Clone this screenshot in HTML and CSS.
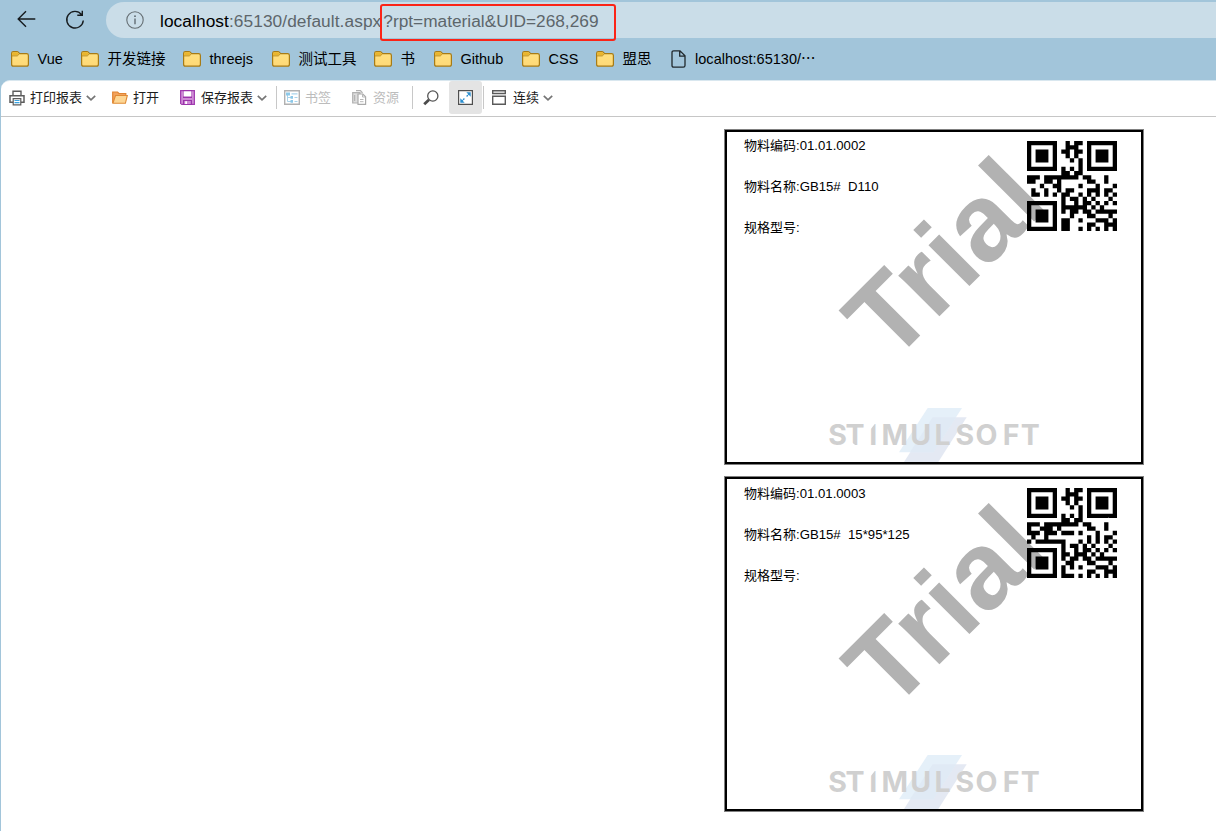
FILE: index.html
```html
<!DOCTYPE html>
<html lang="zh-CN">
<head>
<meta charset="utf-8">
<title>default.aspx</title>
<link rel="stylesheet" href="styles.css">
</head>
<body>
<svg class="defs" width="0" height="0">
  <defs>
    <linearGradient id="fold" x1="0" y1="0" x2="0" y2="1"><stop offset="0" stop-color="#ffe182"/><stop offset="1" stop-color="#ffd976"/></linearGradient>
    <symbol id="folder" viewBox="0 0 18 16">
      <path d="M.6 13.2V2.4Q.6.6 2.4.6H6q.8 0 1.300.6L8.600 2.600H15.600Q17.400 2.600 17.400 4.400V13.200Q17.400 15.200 15.600 15.200H2.400Q.6 15.200.6 13.200Z" fill="url(#fold)" stroke="#a77b16" stroke-width="1.200"/>
      <path d="M1.200 4.600V2.400Q1.200 1.200 2.400 1.200H6L8 2.900 6.500 4.600Z" fill="#eab52c"/>
      <path d="M1 4.900H6.300L8.300 3" fill="none" stroke="#b98a1c" stroke-width=".9"/>
    </symbol>
    <symbol id="chev" viewBox="0 0 10 6"><path d="M.8.8 5 4.800 9.200.8" fill="none" stroke="#757575" stroke-width="1.700"/></symbol>
    <symbol id="logo" viewBox="0 0 230 62">
      <path d="M112.700 17.300H146.700L118.300 62H84Z" fill="#e4e9f3"/>
      <path d="M107.700 8H142L113.300 52.300H79Z" fill="#e5f0f9"/>
      <path d="M112.700 17.300H136L113.300 52.300H90Z" fill="#e0eaf5"/>
      <text x="8.300 25.600 49.300 61.500 90.300 114.500 135.600 155.600 182.800 200.800" y="45.400" class="brand">STIMULSOFT</text>
      <path d="M50 24V30L54.800 24ZM32 46.500V42.500L37 46.500Z" fill="#fff"/>
    </symbol>
  </defs>
</svg>

<header class="chrome">
  <div class="nav">
    <svg class="back" width="20" height="18" viewBox="0 0 20 18"><path d="M18.300 9H1.500M9 1.200 1.200 9 9 16.800" fill="none" stroke="#161b1e" stroke-width="1.400"/></svg>
    <svg class="reload" width="20" height="20" viewBox="0 0 20 20"><path d="M16.500 4.500A8.300 8.300 0 1 0 18.300 10.500M17.300.8V5.300H12.300" fill="none" stroke="#161b1e" stroke-width="1.400"/></svg>
    <div class="address">
      <svg width="18" height="18" viewBox="0 0 18 18"><circle cx="9" cy="9" r="8.200" fill="none" stroke="#646d72" stroke-width="1.100"/><path d="M9 7.600V13.300" stroke="#59636a" stroke-width="1.300"/><circle cx="9" cy="5.200" r=".9" fill="#59636a"/></svg>
      <div class="url"><b>localhost</b>:65130/default.aspx<span class="query">?rpt=material&amp;UID=268,269</span></div>
    </div>
  </div>
  <nav class="bookmarks">
    <a><svg><use href="#folder"/></svg>Vue</a>
    <a><svg><use href="#folder"/></svg>开发链接</a>
    <a><svg><use href="#folder"/></svg>threejs</a>
    <a><svg><use href="#folder"/></svg>测试工具</a>
    <a><svg><use href="#folder"/></svg>书</a>
    <a><svg><use href="#folder"/></svg>Github</a>
    <a><svg><use href="#folder"/></svg>CSS</a>
    <a><svg><use href="#folder"/></svg>盟思</a>
    <a class="page"><svg viewBox="0 0 15 18"><path d="M1 2.500Q1 .8 2.700.8H9L14 5.800V15.500Q14 17.200 12.300 17.200H2.700Q1 17.200 1 15.500ZM8.700 1V6.200H14" fill="none" stroke="#20282c" stroke-width="1.300"/></svg><span>localhost:65130/⋯</span></a>
  </nav>
</header>

<main class="viewer">
  <div class="toolbar">
    <div class="tool print">
      <svg width="16" height="16" viewBox="0 0 16 16"><path d="M4 5.500V1.200H12V5.500" fill="#fff" stroke="#5d5d5d" stroke-width="1.400"/><path d="M1 5.700H15V12.300H1Z" fill="#fff" stroke="#5d5d5d" stroke-width="1.500"/><path d="M4.200 8.700H11.800V14.900H4.200Z" fill="#fff" stroke="#5d5d5d" stroke-width="1.200"/><path d="M5.500 10.500H10.500M5.500 12.700H10.500" stroke="#3ba3e0" stroke-width="1.200"/></svg>
      <span>打印报表</span><svg class="chev"><use href="#chev"/></svg>
    </div>
    <div class="tool open">
      <svg width="16" height="13" viewBox="0 0 16 13"><path d="M.7 12V1H5.500L7 2.500H13.800V5" fill="#f2a25d" stroke="#e08432" stroke-width="1.200"/><path d="M3.500 4.500H15.300L13.400 12.300H.9Z" fill="#fdd694" stroke="#e08a35" stroke-width="1.100"/></svg>
      <span>打开</span>
    </div>
    <div class="tool save">
      <svg width="15" height="15" viewBox="0 0 15 15"><path d="M0 0H15V15H1.500L0 13.500Z" fill="#a23fb0"/><path d="M1.200 1.200H3V8H12V1.200H13.800V13.800H1.200Z" fill="#cf8bd6"/><path d="M3.600 0H11.400V6.700H3.600Z" fill="#fff"/><path d="M3 0H12V1.200H3ZM3 6.700H12V8H3ZM3 10H12V15H3Z" fill="#9b35ab"/><path d="M4.200 11H10.800V14H4.200Z" fill="#cf8bd6"/><path d="M5.200 11.300H7V14H5.200Z" fill="#fff"/></svg>
      <span>保存报表</span><svg class="chev"><use href="#chev"/></svg>
    </div>
    <i class="sep"></i>
    <div class="tool marks off">
      <svg width="16" height="15" viewBox="0 0 16 15"><path d="M.7.7H15.300V14.300H.7Z" fill="#fff" stroke="#b1b1b1" stroke-width="1.400"/><path d="M3.500 4V11.500H7M3.500 7.500H7" fill="none" stroke="#a9d3ea" stroke-width="1"/><path d="M2 2.500H6V5.500H2ZM6.500 6H9V8.800H6.500ZM6.500 10H9V12.800H6.500Z" fill="#8cc8e8"/><path d="M7.500 3.800H13.500M10.500 7.500H13.500M10.500 11.500H13.500" stroke="#a9d3ea" stroke-width="1.200"/></svg>
      <span>书签</span>
    </div>
    <div class="tool res off">
      <svg width="15" height="15" viewBox="0 0 15 15"><path d="M.7 2.600H8V13H.7Z" fill="#ddd" stroke="#b1b1b1" stroke-width="1.200"/><path d="M4 .6H8.500L10.500 3" fill="none" stroke="#b1b1b1" stroke-width="1.200"/><path d="M6 4H10.800L13.600 6.800V14.300H6Z" fill="#fff" stroke="#aaa" stroke-width="1.200"/><path d="M10.500 4V7H13.500M8 9.500H11.500M8 11.700H11.500" fill="none" stroke="#b8b8b8" stroke-width="1"/><path d="M2.700 5V11" stroke="#aaa"/></svg>
      <span>资源</span>
    </div>
    <i class="sep"></i>
    <svg class="find" width="16" height="16" viewBox="0 0 16 16"><circle cx="9.800" cy="6" r="5.100" fill="#fff" stroke="#555" stroke-width="1.300"/><path d="M6 9.800 1.200 14.300" stroke="#4b4b4b" stroke-width="2.800"/></svg>
    <div class="full"><svg width="15" height="15" viewBox="0 0 15 15"><path d="M.6.6H14.400V14.400H.6Z" fill="#fff" stroke="#4f4f4f" stroke-width="1.200"/><path d="M8.600 6.400 11.500 3.500M6.400 8.600 3.500 11.500" stroke="#2b8fd0" stroke-width="1.400" stroke-dasharray="1.800 .5"/><path d="M8.300 2.300H12.700V6.700ZM2.300 8.300V12.700H6.700Z" fill="#2b8fd0"/></svg></div>
    <i class="sep last"></i>
    <div class="tool cont">
      <svg width="14" height="15" viewBox="0 0 14 15"><path d="M.7.7H13.300V3.500H.7ZM.7 6.200H13.300V14.300H.7Z" fill="#fff" stroke="#5a5a5a" stroke-width="1.400"/></svg>
      <span>连续</span><svg class="chev"><use href="#chev"/></svg>
    </div>
  </div>

  <div class="pages">
    <section class="label">
      <svg class="trial" viewBox="0 0 420 336"><text transform="translate(166.900 235.700) rotate(-45)">Trial</text></svg>
      <svg class="logo"><use href="#logo"/></svg>
      <dl><dt>物料编码:<span>01.01.0002</span></dt><dt>物料名称:<span>GB15#  D110</span></dt><dt>规格型号:</dt></dl>
      <svg class="qr" data-code="01.01.0002" viewBox="0 0 21 21"></svg>
    </section>
    <section class="label">
      <svg class="trial second" viewBox="0 0 420 336"><text transform="translate(166.900 235.700) rotate(-45)">Trial</text></svg>
      <svg class="logo"><use href="#logo"/></svg>
      <dl class="second"><dt>物料编码:<span>01.01.0003</span></dt><dt>物料名称:<span>GB15#  15*95*125</span></dt><dt>规格型号:</dt></dl>
      <svg class="qr" data-code="01.01.0003" viewBox="0 0 21 21"></svg>
    </section>
  </div>
</main>
<script src="qr.js"></script>
</body>
</html>
```
FILE: styles.css
```css
* { box-sizing: border-box; }
body {
  margin: 0;
  width: 1216px;
  height: 831px;
  overflow: hidden;
  background: #a2c5da;
  font-family: "Liberation Sans", "Noto Sans CJK SC", sans-serif;
}
svg { display: block; flex: none; }
.defs { position: absolute; }

.nav { display: flex; align-items: center; height: 38px; padding: 2px 0 0 17px; }
.back { margin-top: -2px; }
.reload { margin: -1px 0 0 28px; }
.address {
  display: flex;
  align-items: center;
  flex: 1;
  height: 36px;
  margin-left: 21px;
  padding-left: 20px;
  border-radius: 18px 0 0 18px;
  background: #cadde8;
}
.url {
  display: flex;
  align-items: baseline;
  align-self: flex-start;
  margin: 2px 0 0 16px;
  font-size: 17.300px;
  line-height: 30px;
  letter-spacing: .08px;
  color: #5d666b;
  white-space: pre;
}
.url b { font-weight: 400; color: #000; }
.query {
  height: 37px;
  margin-left: -1px;
  padding: 0 15px 0 1px;
  letter-spacing: 0;
  border: 2px solid #fb2417;
  border-radius: 3px;
}

.bookmarks {
  display: grid;
  grid-template-columns: 70px 102px 89px 102px 60px 88px 74px 75px 160px;
  height: 42px;
  padding-left: 11px;
  align-items: center;
}
.bookmarks a {
  display: flex;
  align-items: center;
  gap: 8.500px;
  font-size: 14.500px;
  line-height: 20px;
  color: #000;
  white-space: nowrap;
}
.bookmarks svg { width: 18px; height: 16px; }
.bookmarks .page svg { width: 15px; height: 18px; }
.bookmarks .page { gap: 9px; letter-spacing: .03px; }

.viewer {
  height: 751px;
  margin-left: 1px;
  border-top: 1px solid #d9e7ef;
  border-radius: 9px 0 0 0;
  background: #fff;
}
.toolbar {
  display: flex;
  align-items: center;
  height: 36px;
  padding: 0 0 2px 8px;
  border-bottom: 1px solid #c6c6c6;
  font-size: 13px;
  line-height: 18px;
  color: #1c1c1c;
}
.tool { display: flex; align-items: center; height: 34px; white-space: nowrap; }
.tool span { margin-left: 5px; }
.tool .chev { width: 10px; height: 6px; margin-left: 4px; }
.open { margin-left: 16px; }
.open span { margin-left: 5px; }
.save { margin-left: 21px; }
.save span { margin-left: 6px; }
.sep { width: 1px; height: 23px; background: #c8c8c8; margin-left: 9px; }
.marks { margin-left: 7px; }
.res { margin-left: 21px; }
.res span { margin-left: 6px; }
.res + .sep { margin-left: 13px; }
.off { color: #bcbcbc; }
.find { margin-left: 10px; }
.full {
  display: grid;
  place-items: center;
  width: 33px;
  height: 33px;
  margin-left: 10px;
  border-radius: 3px;
  background: #e4e4e4;
}
.sep.last { margin-left: 1px; }
.cont { margin-left: 8px; }
.cont span { margin-left: 7px; }

.pages {
  display: flex;
  flex-direction: column;
  gap: 11px;
  padding: 12px 0 0 723px;
}
.label {
  position: relative;
  display: flex;
  justify-content: space-between;
  width: 420px;
  height: 336px;
  padding: 11px 26px 0 19px;
  border: 1px solid #808080;
  background: #fff;
  box-shadow: inset 0 0 0 2px #000;
}
.trial { position: absolute; left: -1px; top: -1px; width: 420px; height: 336px; }
.trial.second { top: 0; }
.trial text { font: 700 109.500px "Liberation Sans", sans-serif; fill: #b2b2b2; }
.logo { position: absolute; left: 95px; top: 270px; width: 230px; height: 62px; }
.brand { font: 700 28.500px Inter, sans-serif; fill: #d0d0d0; }
.label dl {
  display: flex;
  flex-direction: column;
  gap: 21px;
  margin: -5px 0 0;
  font-size: 13px;
  line-height: 20px;
  white-space: pre;
  color: #000;
}
.label dl.second { margin-top: -4px; }
.label dt span { font-size: 13.200px; }
.qr { position: relative; width: 90px; height: 90px; }
```
FILE: qr.js
```js
// QR version 1, error correction L, alphanumeric mode, mask 0.
function qrMatrix(text) {
  const chars = '0123456789ABCDEFGHIJKLMNOPQRSTUVWXYZ $%*+-./:';
  let bits = '0010' + text.length.toString(2).padStart(9, '0');
  for (let i = 0; i < text.length; i += 2) {
    const a = chars.indexOf(text[i]);
    bits += i + 1 < text.length
      ? (a * 45 + chars.indexOf(text[i + 1])).toString(2).padStart(11, '0')
      : a.toString(2).padStart(6, '0');
  }
  bits += '0000';
  while (bits.length % 8) bits += '0';
  const data = bits.match(/.{8}/g).map(b => parseInt(b, 2));
  for (let pad = 0xec; data.length < 19; pad ^= 0xec ^ 0x11) data.push(pad);

  const mul = (x, y) => {
    let r = 0;
    for (; y; y >>= 1) {
      if (y & 1) r ^= x;
      x <<= 1;
      if (x & 256) x ^= 0x11d;
    }
    return r;
  };
  let gen = [1], root = 1;
  for (let i = 0; i < 7; i++) {
    const next = [...gen, 0];
    gen.forEach((g, j) => { next[j + 1] ^= mul(g, root); });
    gen = next;
    root = mul(root, 2);
  }
  const rem = [...data, 0, 0, 0, 0, 0, 0, 0];
  for (let i = 0; i < 19; i++) {
    const f = rem[i];
    gen.forEach((g, j) => { rem[i + j] ^= mul(g, f); });
  }
  const stream = [...data, ...rem.slice(19)].map(b => b.toString(2).padStart(8, '0')).join('');

  const m = Array.from({ length: 21 }, () => Array(21).fill(null));
  const finder = (r0, c0) => {
    for (let r = -1; r < 8; r++) for (let c = -1; c < 8; c++) {
      if (!m[r0 + r] || m[r0 + r][c0 + c] === undefined) continue;
      const d = Math.max(Math.abs(r - 3), Math.abs(c - 3));
      m[r0 + r][c0 + c] = d === 3 || d < 2 ? 1 : 0;
    }
  };
  finder(0, 0); finder(0, 14); finder(14, 0);
  for (let i = 8; i < 13; i++) m[6][i] = m[i][6] = (i + 1) % 2;
  const fmt = [...'111011111000100'].map(Number);
  const first = [[8,0],[8,1],[8,2],[8,3],[8,4],[8,5],[8,7],[8,8],[7,8],[5,8],[4,8],[3,8],[2,8],[1,8],[0,8]];
  fmt.forEach((v, i) => {
    m[first[i][0]][first[i][1]] = v;
    if (i < 7) m[20 - i][8] = v; else m[8][6 + i] = v;
  });
  m[13][8] = 1;

  let k = 0, up = true;
  for (let c = 20; c > 0; c -= 2) {
    if (c === 6) c--;
    for (let i = 0; i < 21; i++) {
      const r = up ? 20 - i : i;
      for (const cc of [c, c - 1]) {
        if (m[r][cc] === null) m[r][cc] = Number(stream[k++] || 0) ^ ((r + cc) % 2 === 0 ? 1 : 0);
      }
    }
    up = !up;
  }
  return m;
}

document.querySelectorAll('.qr').forEach(svg => {
  let d = '';
  qrMatrix(svg.dataset.code).forEach((row, r) => row.forEach((v, c) => {
    if (v) d += `M${c} ${r}h1v1h-1z`;
  }));
  const path = document.createElementNS('http://www.w3.org/2000/svg', 'path');
  path.setAttribute('d', d);
  svg.append(path);
});
```
